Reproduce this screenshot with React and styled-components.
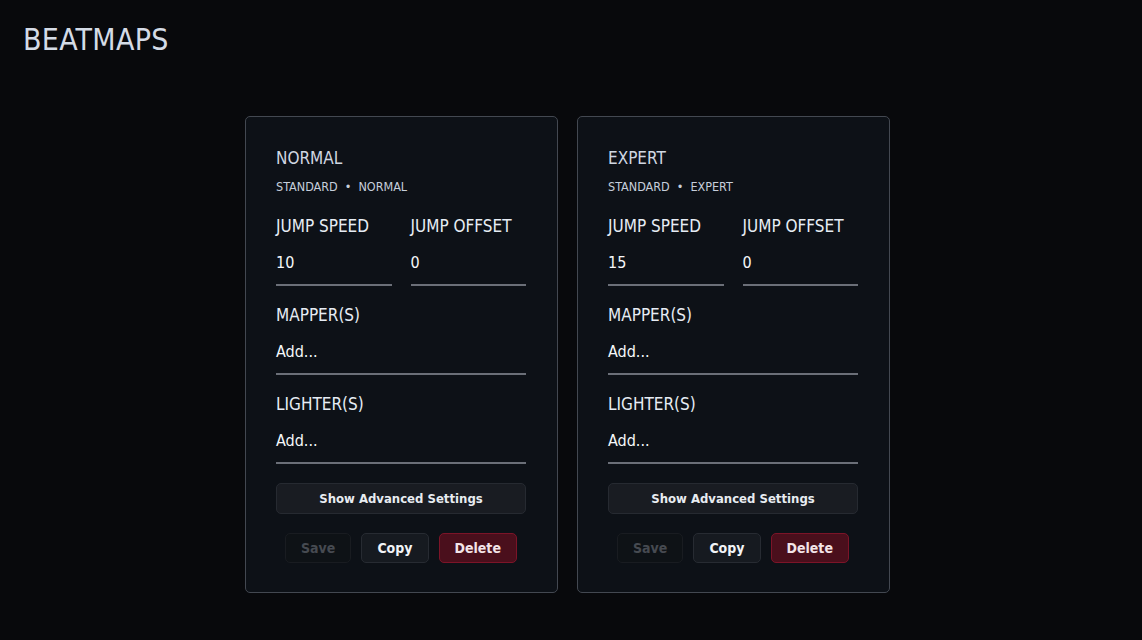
import React from "react";
import styled, { createGlobalStyle } from "styled-components";

const GlobalStyle = createGlobalStyle`
  html, body {
    margin: 0;
    padding: 0;
    background: #08090c;
    color: #d6dde8;
    font-family: "Liberation Sans Narrow", "DejaVu Sans Condensed", "Liberation Sans", sans-serif;
  }
  * { box-sizing: border-box; }
`;

const beatmaps = [
  { name: "NORMAL", mode: "STANDARD", difficulty: "NORMAL", speed: "10", offset: "0" },
  { name: "EXPERT", mode: "STANDARD", difficulty: "EXPERT", speed: "15", offset: "0" },
];

const BeatmapCard = ({ map }) => (
  <Card>
    <Name>{map.name}</Name>
    <Meta>
      {map.mode}
      <Dot>•</Dot>
      {map.difficulty}
    </Meta>
    <Row>
      <Field>
        <Label>JUMP SPEED</Label>
        <Value>{map.speed}</Value>
      </Field>
      <Field>
        <Label>JUMP OFFSET</Label>
        <Value>{map.offset}</Value>
      </Field>
    </Row>
    <Field>
      <Label>MAPPER(S)</Label>
      <Value>Add...</Value>
    </Field>
    <Field>
      <Label>LIGHTER(S)</Label>
      <Value>Add...</Value>
    </Field>
    <WideButton>Show Advanced Settings</WideButton>
    <Actions>
      <ActionButton variant="disabled">Save</ActionButton>
      <ActionButton>Copy</ActionButton>
      <ActionButton variant="danger">Delete</ActionButton>
    </Actions>
  </Card>
);

const App = () => (
  <Page>
    <GlobalStyle />
    <Heading>BEATMAPS</Heading>
    <Cards>
      {beatmaps.map((m) => (
        <BeatmapCard key={m.name} map={m} />
      ))}
    </Cards>
  </Page>
);

export default App;

const Page = styled.div`
  min-height: 640px;
  padding: 20px 23px;
`;

const Heading = styled.h1`
  margin: 0;
  font-size: 30px;
  font-weight: 400;
  letter-spacing: 0.3px;
  color: #d4dbe6;
  line-height: 40px;
`;

const Cards = styled.div`
  display: flex;
  justify-content: center;
  gap: 19px;
  margin-top: 56px;
  padding-right: 7px;
`;

const Card = styled.div`
  width: 313px;
  height: 477px;
  background: #0d1117;
  border: 1px solid #434851;
  border-radius: 5px;
  padding: 29px 31px 0 30px;
  display: flex;
  flex-direction: column;
`;

const Name = styled.div`
  font-size: 17px;
  line-height: 24px;
  color: #d0d7e2;
`;

const Meta = styled.div`
  font-size: 12.5px;
  line-height: 16px;
  margin-top: 9px;
  color: #c6cedb;
`;

const Dot = styled.span`
  margin: 0 7px;
`;

const Row = styled.div`
  display: flex;
  gap: 19px;
  margin-top: 2px;

  & > div {
    flex: 1;
  }
`;

const Field = styled.div`
  display: flex;
  flex-direction: column;
  margin-top: 18px;
`;

const Label = styled.div`
  font-size: 17px;
  line-height: 22px;
  color: #e6ecf4;
`;

const Value = styled.div`
  margin-top: 15px;
  font-size: 16px;
  line-height: 22px;
  font-weight: 400;
  color: #f6f8fa;
  padding-bottom: 10px;
  border-bottom: 2px solid #6b6f78;
`;

const WideButton = styled.button`
  margin-top: 19px;
  height: 31px;
  background: #191c22;
  border: 1px solid #262a31;
  border-radius: 5px;
  color: #e8ecf1;
  font-family: inherit;
  font-size: 13px;
  font-weight: 700;
`;

const Actions = styled.div`
  display: flex;
  justify-content: center;
  gap: 10px;
  margin-top: 19px;
`;

const ActionButton = styled.button`
  height: 30px;
  padding: 0 15px;
  border-radius: 5px;
  font-family: inherit;
  font-size: 14px;
  font-weight: 700;
  background: ${(p) =>
    p.variant === "danger" ? "#4a0f1c" : p.variant === "disabled" ? "#0e1216" : "#161a20"};
  border: 1px solid
    ${(p) =>
      p.variant === "danger" ? "#7c1428" : p.variant === "disabled" ? "#191c21" : "#272b32"};
  color: ${(p) =>
    p.variant === "danger" ? "#f3e4e8" : p.variant === "disabled" ? "#464a51" : "#f2f4f7"};
`;
